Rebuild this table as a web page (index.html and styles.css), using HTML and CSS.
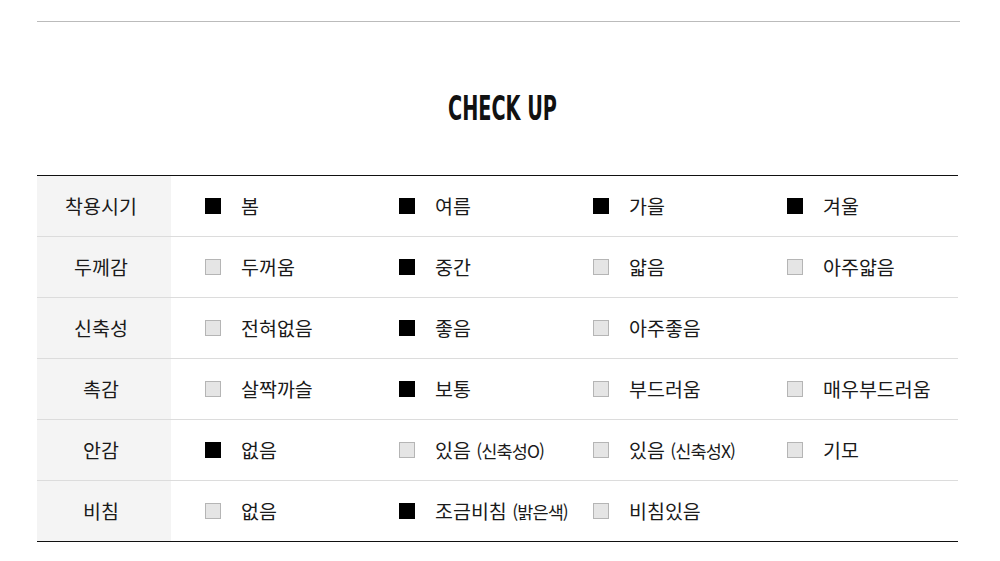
FILE: index.html
```html
<!DOCTYPE html>
<html lang="ko">
<head>
<meta charset="utf-8">
<link rel="stylesheet" href="styles.css">
</head>
<body>
<div class="wrap">
  <div class="topline"></div>
  <h2 class="title"><span>CHECK UP</span></h2>
  <div class="table">
    <div class="row">
      <div class="head">착용시기</div>
      <div class="opt"><i class="box on"></i><span>봄</span></div>
      <div class="opt"><i class="box on"></i><span>여름</span></div>
      <div class="opt"><i class="box on"></i><span>가을</span></div>
      <div class="opt"><i class="box on"></i><span>겨울</span></div>
    </div>
    <div class="row">
      <div class="head">두께감</div>
      <div class="opt"><i class="box"></i><span>두꺼움</span></div>
      <div class="opt"><i class="box on"></i><span>중간</span></div>
      <div class="opt"><i class="box"></i><span>얇음</span></div>
      <div class="opt"><i class="box"></i><span>아주얇음</span></div>
    </div>
    <div class="row">
      <div class="head">신축성</div>
      <div class="opt"><i class="box"></i><span>전혀없음</span></div>
      <div class="opt"><i class="box on"></i><span>좋음</span></div>
      <div class="opt"><i class="box"></i><span>아주좋음</span></div>
      <div class="opt"></div>
    </div>
    <div class="row">
      <div class="head">촉감</div>
      <div class="opt"><i class="box"></i><span>살짝까슬</span></div>
      <div class="opt"><i class="box on"></i><span>보통</span></div>
      <div class="opt"><i class="box"></i><span>부드러움</span></div>
      <div class="opt"><i class="box"></i><span>매우부드러움</span></div>
    </div>
    <div class="row">
      <div class="head">안감</div>
      <div class="opt"><i class="box on"></i><span>없음</span></div>
      <div class="opt"><i class="box"></i><span>있음 <small>(신축성O)</small></span></div>
      <div class="opt"><i class="box"></i><span>있음 <small>(신축성X)</small></span></div>
      <div class="opt"><i class="box"></i><span>기모</span></div>
    </div>
    <div class="row">
      <div class="head">비침</div>
      <div class="opt"><i class="box"></i><span>없음</span></div>
      <div class="opt"><i class="box on"></i><span>조금비침 <small>(밝은색)</small></span></div>
      <div class="opt"><i class="box"></i><span>비침있음</span></div>
      <div class="opt"></div>
    </div>
  </div>
</div>
</body>
</html>
```
FILE: styles.css
```css
* { box-sizing: border-box; }
html, body { margin: 0; padding: 0; background: #fff; }
body {
  font-family: "Noto Sans CJK KR", "Noto Sans", sans-serif;
  color: #1a1a1a;
}
.wrap {
  width: 923px;
  margin-left: 37px;
  padding-top: 21px;
}
.topline {
  height: 1px;
  background: #bbbbbb;
}
.title {
  margin: 0;
  height: 153px;
  padding-top: 66px;
  padding-left: 7px;
  text-align: center;
  font-family: "DejaVu Sans Condensed", "DejaVu Sans", sans-serif;
  font-stretch: condensed;
  font-weight: 700;
  font-size: 34px;
  line-height: 40px;
  color: #111;
}
.title span {
  display: inline-block;
  transform: scaleX(0.63);
}
.table {
  width: 921px;
  border-top: 1px solid #111;
  border-bottom: 1px solid #111;
}
.row {
  display: flex;
  height: 61px;
  border-top: 1px solid #dcdcdc;
}
.row:first-child {
  border-top: 0;
  height: 60px;
}
.head {
  width: 134px;
  flex: none;
  background: #f4f4f4;
  display: flex;
  align-items: center;
  justify-content: center;
  padding-right: 6px;
  padding-bottom: 2px;
  font-size: 19.5px;
}
.opt {
  width: 194px;
  flex: none;
  display: flex;
  align-items: center;
  padding-left: 34px;
  gap: 20px;
  font-size: 19.5px;
  white-space: nowrap;
}
.opt span {
  margin-top: -2px;
}
.box {
  display: block;
  width: 16px;
  height: 16px;
  background: #e5e5e5;
  border: 1px solid #b5b5b5;
  flex: none;
}
.box.on {
  background: #000;
  border-color: #000;
}
.opt small {
  font-size: 17.5px;
  letter-spacing: -0.9px;
}
```
